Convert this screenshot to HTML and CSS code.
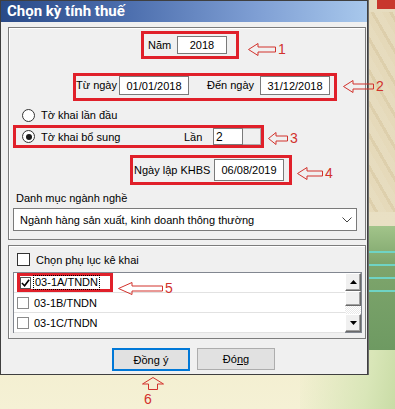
FILE: index.html
```html
<!DOCTYPE html>
<html lang="vi">
<head>
  <meta charset="UTF-8" />
  <meta name="viewport" content="width=device-width, initial-scale=1.0"/>
  <title>Chọn kỳ tính thuế</title>
  <link rel="stylesheet" href="styles.css">
</head>
<body>
  <div class="desktop">
    <div class="deco deco-red"></div>
    <div class="deco deco-tile"></div>
    <div class="deco deco-green"></div>
    <div class="deco deco-glow"></div>

    <div class="dialog">
      <div class="titlebar">Chọn kỳ tính thuế</div>

      <!-- KỲ TÍNH THUẾ -->
      <div class="group group-period">
        <div class="mark mark-year">
          <span class="lbl lbl-year">Năm</span>
          <span class="field field-year">2018</span>
        </div>

        <div class="mark mark-range">
          <span class="lbl lbl-from">Từ ngày</span>
          <span class="field field-date">01/01/2018</span>
          <span class="lbl lbl-to">Đến ngày</span>
          <span class="field field-date">31/12/2018</span>
        </div>

        <div class="radio-row">
          <span class="radio"></span>
          <span>Tờ khai lần đầu</span>
        </div>

        <div class="mark mark-extra">
          <span class="radio checked"></span>
          <span class="radio-text">Tờ khai bổ sung</span>
          <span class="lbl lbl-times">Lần</span>
          <span class="field field-times">2</span>
          <span class="spin"></span>
        </div>

        <div class="mark mark-khbs">
          <span class="lbl lbl-khbs">Ngày lập KHBS</span>
          <span class="field field-khbs">06/08/2019</span>
        </div>

        <div class="caption">Danh mục ngành nghề</div>
        <div class="select">
          <span>Ngành hàng sản xuất, kinh doanh thông thường</span>
          <svg class="chevron" width="10" height="6" viewBox="0 0 10 6"><polyline points="0.5,0.5 5,5 9.5,0.5" fill="none" stroke="#444" stroke-width="1"/></svg>
        </div>
      </div>

      <!-- PHỤ LỤC -->
      <div class="group group-annex">
        <div class="check-row">
          <span class="checkbox"></span>
          <span>Chọn phụ lục kê khai</span>
        </div>
        <div class="listbox">
          <div class="list-items">
            <div class="list-item">
              <span class="mark mark-item">
                <span class="checkbox small checked">
                  <svg width="10" height="10" viewBox="0 0 10 10"><polyline points="1,5 4,8 9,1.5" fill="none" stroke="#000" stroke-width="1.8"/></svg>
                </span>
                <span class="focus">03-1A/TNDN</span>
              </span>
            </div>
            <div class="list-item">
              <span class="checkbox small"></span>
              <span class="item-text">03-1B/TNDN</span>
            </div>
            <div class="list-item">
              <span class="checkbox small"></span>
              <span class="item-text">03-1C/TNDN</span>
            </div>
          </div>
          <div class="scrollbar">
            <span class="sb-btn"><svg width="7" height="4" viewBox="0 0 7 4"><polygon points="3.5,0 7,4 0,4" fill="#000"/></svg></span>
            <span class="sb-btn sb-thumb"></span>
            <span class="sb-track"></span>
            <span class="sb-btn"><svg width="7" height="4" viewBox="0 0 7 4"><polygon points="0,0 7,0 3.5,4" fill="#000"/></svg></span>
          </div>
        </div>
      </div>

      <div class="buttons">
        <button class="btn btn-default">Đồn<u>g</u> ý</button>
        <button class="btn">Đó<u>n</u>g</button>
      </div>
    </div>

    <!-- chú thích -->
    <div class="note note-1">
      <svg width="28" height="13" viewBox="0 0 28 13"><polygon points="0.5,6.5 10,0.5 10,4 27.5,4 27.5,9 10,9 10,12.5"/></svg>
      <span>1</span>
    </div>
    <div class="note note-2">
      <svg width="31" height="13" viewBox="0 0 31 13"><polygon points="0.5,6.5 10,0.5 10,4 30.5,4 30.5,9 10,9 10,12.5"/></svg>
      <span>2</span>
    </div>
    <div class="note note-3">
      <svg width="20" height="13" viewBox="0 0 20 13"><polygon points="0.5,6.5 8,0.5 8,4 19.5,4 19.5,9 8,9 8,12.5"/></svg>
      <span>3</span>
    </div>
    <div class="note note-4">
      <svg width="26" height="13" viewBox="0 0 26 13"><polygon points="0.5,6.5 10,0.5 10,4 25.5,4 25.5,9 10,9 10,12.5"/></svg>
      <span>4</span>
    </div>
    <div class="note note-5">
      <svg width="45" height="13" viewBox="0 0 45 13"><polygon points="0.5,6.5 14,0.5 14,4 44.5,4 44.5,9 14,9 14,12.5"/></svg>
      <span>5</span>
    </div>
    <div class="note note-6">
      <svg width="22" height="13" viewBox="0 0 22 13"><polygon points="11,0.5 21.5,7 15.5,7 15.5,12.5 6.5,12.5 6.5,7 0.5,7"/></svg>
      <span>6</span>
    </div>
  </div>
</body>
</html>
```

FILE: styles.css
```css
:root {
  --face: #f0f0f0;
  --mark: #e0202a;
  --note: #d2322c;
  --field-border: #7a7a7a;
  --btn-face: #e1e1e1;
}

* {
  box-sizing: border-box;
}

body {
  margin: 0;
  width: 395px;
  height: 409px;
  overflow: hidden;
  font-family: "Liberation Sans", Arial, sans-serif;
  font-size: 11px;
  color: #000;
}

.desktop {
  position: relative;
  width: 395px;
  height: 409px;
  background: linear-gradient(180deg, #e6dcbf 0%, #e9e0c4 55%, #f3eecf 85%, #f5f1d5 100%);
}

/* background decorations */
.deco {
  position: absolute;
}

.deco-red {
  left: 377px;
  top: 0;
  width: 18px;
  height: 9px;
  background: #c8372d;
}

.deco-tile {
  left: 368px;
  top: 12px;
  width: 27px;
  height: 200px;
  background: repeating-linear-gradient(60deg, #e4d7b6 0 6px, #d9c9a3 6px 9px, #e6dbbd 9px 16px);
  opacity: 0.7;
}

.deco-green {
  left: 368px;
  top: 226px;
  width: 27px;
  height: 124px;
  background:
    repeating-linear-gradient(180deg, transparent 0 7px, #6fd3c4 7px 9px, transparent 9px 13px),
    linear-gradient(180deg, #a2c48a 0%, #7ea56c 30%, #6e9a62 100%);
  background-size: 100% 52px, 100% 100%;
  background-position: 0 18px, 0 0;
  background-repeat: no-repeat;
}

.deco-glow {
  left: 300px;
  top: 350px;
  width: 95px;
  height: 59px;
  background: linear-gradient(100deg, rgba(244, 240, 210, 0) 0%, #d9e6b8 70%, #c9dca6 100%);
}

/* dialog */
.dialog {
  position: relative;
  width: 368px;
  height: 375px;
  background: var(--face);
  border: 1px solid #3f3f3f;
  box-shadow: 1px 0 0 #6a6a6a;
}

.titlebar {
  height: 21px;
  line-height: 21px;
  padding-left: 6px;
  color: #fff;
  font-family: Roboto, "Liberation Sans", sans-serif;
  font-weight: bold;
  font-size: 15px;
  background: linear-gradient(90deg, #294a88 0%, #4d6fae 35%, #7f9fd4 70%, #a8c8ec 100%);
}

.group {
  margin-left: 7px;
  width: 358px;
  border: 1px solid #7c7c7c;
  box-shadow: inset 1px 1px 0 #fff;
}

.group-period {
  margin-top: 5px;
  height: 213px;
}

.group-annex {
  margin-top: 5px;
  height: 94px;
}

.mark {
  display: flex;
  align-items: center;
  border: 3px solid var(--mark);
}

.lbl {
  white-space: nowrap;
}

.field {
  display: flex;
  align-items: center;
  justify-content: center;
  background: #fff;
  border: 1px solid var(--field-border);
}

/* Năm */
.mark-year {
  margin: 3px 0 0 132px;
  width: 98px;
  height: 28px;
  padding-left: 4px;
}

.lbl-year {
  width: 29px;
}

.field-year {
  width: 50px;
  height: 18px;
}

/* Từ ngày - Đến ngày */
.mark-range {
  margin: 14px 0 0 64px;
  width: 264px;
  height: 28px;
  align-items: flex-start;
}

.mark-range .lbl {
  line-height: 19px;
}

.lbl-from {
  width: 43px;
}

.lbl-to {
  margin-left: 18px;
  width: 53px;
}

.field-date {
  width: 70px;
  height: 19px;
}

/* radio */
.radio-row {
  display: flex;
  align-items: center;
  margin: 7px 0 0 13px;
  height: 14px;
}

.radio {
  flex: none;
  position: relative;
  width: 13px;
  height: 13px;
  margin-right: 6px;
  border: 1px solid #333;
  border-radius: 50%;
  background: #fff;
}

.radio.checked::after {
  content: "";
  position: absolute;
  left: 2.5px;
  top: 2.5px;
  width: 6px;
  height: 6px;
  border-radius: 50%;
  background: #1a1a1a;
}

.mark-extra {
  margin: 3px 0 0 4px;
  width: 251px;
  height: 23px;
  padding-left: 6px;
}

.radio-text {
  width: 143px;
}

.lbl-times {
  width: 29px;
}

.field-times {
  justify-content: flex-start;
  padding-left: 2px;
  width: 30px;
  height: 17px;
  font-size: 12px;
}

.spin {
  width: 18px;
  height: 17px;
  background: var(--face);
  border: 1px solid #adadad;
  border-left: none;
}

/* Ngày lập KHBS */
.mark-khbs {
  margin: 7px 0 0 121px;
  width: 162px;
  height: 30px;
  padding-left: 1px;
}

.lbl-khbs {
  width: 80px;
}

.field-khbs {
  width: 70px;
  height: 22px;
}

.caption {
  margin: 7px 0 0 7px;
  height: 13px;
  line-height: 13px;
}

.select {
  display: flex;
  align-items: center;
  margin: 3px 0 0 4px;
  width: 344px;
  height: 23px;
  padding-left: 6px;
  background: #fff;
  border: 1px solid var(--field-border);
}

.chevron {
  margin-left: auto;
  margin-right: 4px;
}

/* phụ lục */
.check-row {
  display: flex;
  align-items: center;
  margin: 7px 0 0 8px;
  height: 13px;
}

.checkbox {
  flex: none;
  display: flex;
  align-items: center;
  justify-content: center;
  width: 13px;
  height: 13px;
  margin-right: 6px;
  background: #fff;
  border: 1px solid #333;
}

.checkbox.small {
  width: 12px;
  height: 12px;
  margin-right: 5px;
  border-color: #8a8a8a;
}

.checkbox.checked {
  width: 11px;
  margin-right: 0;
  border-color: #555;
}

.listbox {
  display: flex;
  margin: 6px 0 0 4px;
  width: 349px;
  height: 61px;
  background: #fff;
  border: 1px solid #828790;
}

.list-items {
  flex: 1;
}

.list-item {
  display: flex;
  align-items: center;
  height: 20px;
  padding-left: 3px;
  border-bottom: 1px solid #e2e2e2;
}

.list-item:first-child {
  align-items: flex-start;
}

.mark-item {
  width: 96px;
  height: 19px;
}

.focus {
  margin-left: 2px;
  padding: 0 1px;
  line-height: 13px;
  border: 1px dotted #000;
}

.scrollbar {
  display: flex;
  flex-direction: column;
  width: 16px;
  background: repeating-conic-gradient(#e8e8e8 0 25%, #fff 0 50%) 0 0 / 2px 2px;
}

.sb-btn {
  display: flex;
  align-items: center;
  justify-content: center;
  height: 18px;
  background: var(--face);
  border: 1px solid;
  border-color: #fff #696969 #696969 #fff;
  box-shadow: inset -1px -1px 0 #a0a0a0;
}

.sb-thumb {
  height: 15px;
}

.sb-track {
  flex: 1;
}

/* buttons */
.buttons {
  display: flex;
  align-items: flex-start;
  gap: 7px;
  margin: 9px 0 0 111px;
}

.btn {
  width: 78px;
  height: 22px;
  padding: 0;
  font-family: inherit;
  font-size: 11px;
  color: #000;
  background: var(--btn-face);
  border: 1px solid #adadad;
}

.btn-default {
  height: 23px;
  border: 2px solid #0078d7;
}

/* annotations */
.note {
  position: absolute;
  display: flex;
  align-items: center;
  color: var(--note);
  font-size: 14px;
  line-height: 14px;
}

.note svg {
  display: block;
}

.note polygon {
  fill: none;
  stroke: var(--note);
  stroke-width: 1;
}

.note span {
  margin-left: 2px;
}

.note-1 { left: 248px; top: 42px; }
.note-2 { left: 343px; top: 79px; }
.note-3 { left: 268px; top: 131px; }
.note-4 { left: 297px; top: 166px; }
.note-5 { left: 118px; top: 281px; }

.note-6 {
  left: 142px;
  top: 377px;
  flex-direction: column;
  align-items: flex-start;
}

.note-6 span {
  margin: 2px 0 0 2px;
}
```
